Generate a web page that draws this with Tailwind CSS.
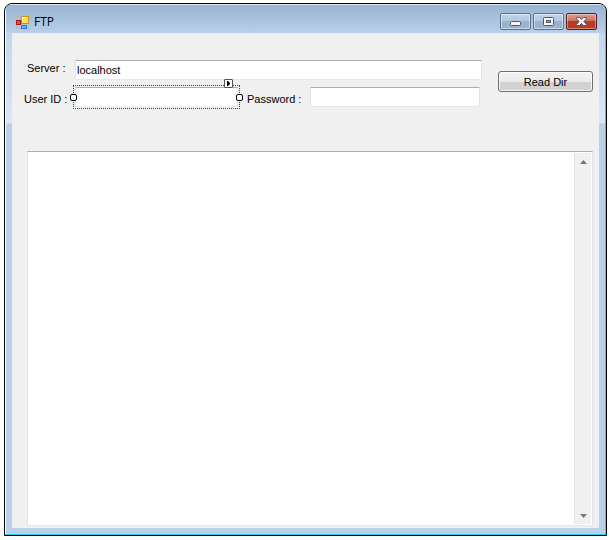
<!DOCTYPE html>
<html lang="en">
<head>
    <meta charset="UTF-8">
    <meta name="viewport" content="width=device-width, initial-scale=1.0">
    <title>FTP</title>
    <script src="https://cdn.jsdelivr.net/npm/@tailwindcss/browser@4"></script>
</head>
<body class="bg-white h-screen flex flex-col pt-[3px] pr-[2px] pb-1 pl-1 overflow-hidden font-['Liberation_Sans',sans-serif] text-[11px] leading-4 text-black">
<div class="flex-1 min-h-0 flex flex-col rounded-t-lg border border-black bg-[#bad1ea] overflow-hidden">
    <div class="flex-1 min-h-0 flex flex-col rounded-t-[7px] border border-t-[#dce8f4] border-l-white border-r-[#2fd3f0] border-b-[#2fc8ee] bg-linear-to-b from-[#bad1ea] from-0% via-[#dbe7f5] via-[118px] to-[#bad1ea] to-[119px]">
        <!-- Title bar -->
        <header class="h-7 shrink-0 flex items-end justify-between pl-[10px] pr-2 pb-[3px] bg-linear-to-b from-[#98b4d2] to-[#b8d0ea]">
            <div class="flex items-center gap-[5px]">
                <svg class="w-[13px] h-[13px]" viewBox="0 0 13 13" aria-hidden="true">
                    <path d="M0.5 0.5H5.5V12.5H0.5ZM5.5 12.5H12.5V8" fill="none" stroke="#b3b9bd"/>
                    <rect x="0.5" y="4.5" width="4" height="4" fill="#e0523f" stroke="#a31f14"/>
                    <rect x="5.5" y="0.5" width="7" height="7" fill="#ffdc58" stroke="#c8951a"/>
                    <path d="M6 1.5H10M6.5 1V5" stroke="#fff3b8"/>
                    <rect x="5.5" y="9.5" width="5" height="3" fill="#6fa8f5" stroke="#3670d2"/>
                </svg>
                <h1 class="font-['Open_Sans',sans-serif] text-[12px] leading-4">FTP</h1>
            </div>
            <div class="flex gap-[2px]">
                <button type="button" aria-label="Minimize" class="w-[31px] h-[17px] flex items-center justify-center rounded-[2px] border border-[#5d7289] inset-ring inset-ring-white/50 bg-linear-to-b from-[#c0d3e7] from-0% via-[#b0c7df] via-50% to-[#98b4d1] to-50%">
                    <svg class="w-[11px] h-[11px]" viewBox="0 0 11 11" aria-hidden="true">
                        <rect x="0.5" y="5.5" width="10" height="4" rx="1" fill="#f6f6f6" stroke="#535666"/>
                    </svg>
                </button>
                <button type="button" aria-label="Maximize" class="w-[31px] h-[17px] flex items-center justify-center rounded-[2px] border border-[#5d7289] inset-ring inset-ring-white/50 bg-linear-to-b from-[#c0d3e7] from-0% via-[#b0c7df] via-50% to-[#98b4d1] to-50%">
                    <svg class="w-[11px] h-[9px]" viewBox="0 0 11 9" aria-hidden="true">
                        <rect x="0.5" y="0.5" width="10" height="8" rx="1" fill="#f6f6f6" stroke="#535666"/>
                        <rect x="3.5" y="3.5" width="4" height="2" fill="#8fabcb" stroke="#535666"/>
                    </svg>
                </button>
                <button type="button" aria-label="Close" class="w-[31px] h-[17px] flex items-center justify-center rounded-[2px] border border-[#561c22] inset-ring inset-ring-white/40 bg-linear-to-b from-[#dfa093] from-0% via-[#cb6a58] via-50% to-[#b83b24] to-50%">
                    <svg class="w-[11px] h-[9px]" viewBox="0 0 11 9" aria-hidden="true">
                        <path d="M0.5 0.5H3.5L5.5 2.5L7.5 0.5H10.5V1.5L8 4.5L10.5 7.5V8.5H7.5L5.5 6.5L3.5 8.5H0.5V7.5L3 4.5L0.5 1.5Z" fill="#f6f6f6" stroke="#535666"/>
                    </svg>
                </button>
            </div>
        </header>

        <!-- Form -->
        <main class="flex-1 min-h-0 flex flex-col mx-1.5 mb-1.5 pt-[27px] pl-3 pr-1.5 pb-[2px] bg-[#f0f0f0]">
            <div class="flex gap-4">
                <div class="flex-1 min-w-0 flex flex-col gap-[7px]">
                    <div class="flex items-start">
                        <label for="server" class="w-[51px] shrink-0 pl-[3px] whitespace-nowrap">Server :</label>
                        <input type="text" id="server" value="localhost" class="flex-1 min-w-0 h-5 px-px bg-white border border-t-[#abadb3] border-x-[#e2e3ea] border-b-[#e3e9ef] rounded-[1px] outline-none">
                    </div>
                    <div class="flex items-end pr-[2px]">
                        <label for="userId" class="w-[51px] shrink-0 whitespace-nowrap">User ID :</label>
                        <div class="relative flex-[163] min-w-0">
                            <input type="text" id="userId" class="block w-full h-5 px-px bg-white border border-t-[#abadb3] border-x-[#e2e3ea] border-b-[#e3e9ef] rounded-[1px] outline-none">
                            <!-- Selection frame with resize handles and task arrow -->
                            <div class="absolute -inset-[2px] border border-dotted border-[#444] pointer-events-none"></div>
                            <span class="absolute -left-[5px] top-[7px] size-[7px] rounded-[2px] border border-black bg-white"></span>
                            <span class="absolute -right-[5px] top-[7px] size-[7px] rounded-[2px] border border-black bg-white"></span>
                            <button type="button" aria-label="Tasks" class="absolute right-[5px] -top-2 size-[9px] flex items-center justify-center border border-[#55534a] rounded-[1px] bg-white">
                                <svg class="w-[3px] h-[5px]" viewBox="0 0 3 5" aria-hidden="true"><path d="M0 0H1L3 2V3L1 5H0Z" fill="#000"/></svg>
                            </button>
                        </div>
                        <label for="password" class="w-[72px] shrink-0 pl-[9px] whitespace-nowrap">Password :</label>
                        <input type="password" id="password" class="flex-[166] min-w-0 h-5 px-px bg-white border border-t-[#abadb3] border-x-[#e2e3ea] border-b-[#e3e9ef] rounded-[1px] outline-none">
                    </div>
                </div>
                <button type="button" class="mt-[11px] w-[95px] h-[21px] shrink-0 rounded-[3px] border border-[#707070] inset-ring inset-ring-white/80 bg-linear-to-b from-[#f2f2f2] from-0% via-[#ebebeb] via-50% to-[#d2d2d2] to-50%">Read Dir</button>
            </div>

            <!-- Directory listing -->
            <div class="flex-1 min-h-0 flex mt-11 ml-[3px] p-px bg-white border border-t-[#abadb3] border-x-[#e2e3ea] border-b-[#e3e9ef]">
                <textarea aria-label="Directory listing" class="flex-1 min-w-0 resize-none outline-none bg-white"></textarea>
                <div class="w-[17px] flex flex-col justify-between bg-[#f0f0f0] border-l border-[#e3e3e3]">
                    <button type="button" aria-label="Scroll up" class="h-[17px] flex items-center justify-center">
                        <svg class="w-[7px] h-1" viewBox="0 0 7 4" aria-hidden="true"><path d="M3.5 0L7 4H0Z" fill="#777"/></svg>
                    </button>
                    <button type="button" aria-label="Scroll down" class="h-[17px] flex items-center justify-center">
                        <svg class="w-[7px] h-1" viewBox="0 0 7 4" aria-hidden="true"><path d="M0 0H7L3.5 4Z" fill="#777"/></svg>
                    </button>
                </div>
            </div>
        </main>
    </div>
</div>
</body>
</html>
